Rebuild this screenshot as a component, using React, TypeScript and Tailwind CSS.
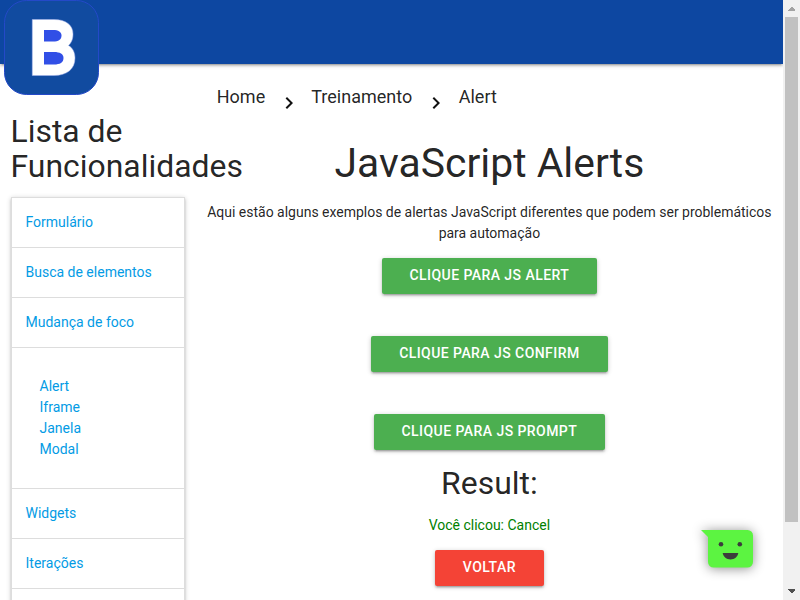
import React from "react";

const shadow =
  "shadow-[0_2px_2px_0_rgba(0,0,0,0.14),0_3px_1px_-2px_rgba(0,0,0,0.12),0_1px_5px_0_rgba(0,0,0,0.2)]";

function Logo() {
  return (
    <svg className="absolute left-1 top-0 h-[95px] w-[95px]" viewBox="0 0 95 95">
      <rect x="0.5" y="0.5" width="94" height="94" rx="22" fill="#114ba0" stroke="#2449c8" />
      <path
        fillRule="evenodd"
        fill="#fff"
        stroke="#a9b5ee"
        strokeWidth="0.5"
        d="M28.300 19.500H50C62 19.500 69 25 69 34C69 40 67 43 64.500 45.500C69 48 71 53 71 58C71 69 63 75.500 50 75.500H28.300Z"
      />
      <path fill="#314fe6" d="M40 30H49C54.500 30 57.500 32 57.500 35.500C57.500 39.500 54.500 41.500 49 41.500H40Z" />
      <path fill="#314fe6" d="M40 52H50C56 52 59.500 54 59.500 58C59.500 62.500 56 64.500 50 64.500H40Z" />
    </svg>
  );
}

function Chevron() {
  return (
    <svg className="mt-[14.500px] h-6 w-6" viewBox="0 0 24 24" fill="#111">
      <path d="M10 6L8.590 7.410 13.170 12l-4.580 4.590L10 18l6-6z" />
    </svg>
  );
}

function Item({ label }: { label: string }) {
  return <li className="h-[50px] shrink-0 border-b border-[#ddd] px-[14px] leading-[49px]">{label}</li>;
}

function Button({ label, className }: { label: string; className: string }) {
  return (
    <button
      className={`h-9 shrink-0 rounded-[2px] pb-[1.500px] text-center text-[14px] font-medium leading-[34px] tracking-[0.44px] text-white ${shadow} ${className}`}
    >
      {label}
    </button>
  );
}

function ChatBubble() {
  return (
    <svg
      className="absolute left-[700px] top-[528px] h-10 w-[54px] drop-shadow-[0_1px_6px_rgba(0,0,0,0.45)]"
      viewBox="0 0 54 40"
    >
      <path fill="#5cf441" d="M1 2H47.500A5.500 5.500 0 0 1 53 7.500V34A5.500 5.500 0 0 1 47.500 39.500H13.500A5.500 5.500 0 0 1 8 34V9Z" />
      <circle cx="21" cy="16.300" r="2.300" fill="#3c3c3c" />
      <circle cx="39.800" cy="16.300" r="2.300" fill="#3c3c3c" />
      <path fill="#3c3c3c" d="M22.700 25H38.300C37.500 29 34.500 31.400 30.500 31.400S23.500 29 22.700 25Z" />
    </svg>
  );
}

export default function App() {
  return (
    <div className="relative flex h-[600px] w-[800px] overflow-hidden bg-white font-[Roboto,sans-serif] text-[14px] leading-[21px] text-[rgba(0,0,0,0.87)]">
      <div className="flex h-[600px] w-[783px] flex-col overflow-hidden">
        <nav className={`h-16 shrink-0 bg-[#0d47a1] ${shadow}`} />
        <div className="flex">
          <aside className="w-[195.750px] shrink-0 px-[10.500px] pt-[49.500px]">
            <h4 className="text-[31.920px] leading-[35.110px]">
              Lista de
              <br />
              Funcionalidades
            </h4>
            <ul className={`mt-[13px] flex flex-col border border-b-0 border-[#ddd] text-[#039be5] ${shadow}`}>
              <Item label="Formulário" />
              <Item label="Busca de elementos" />
              <Item label="Mudança de foco" />
              <li className="h-[141px] shrink-0 border-b border-[#ddd] px-7 pt-7">
                <div>Alert</div>
                <div>Iframe</div>
                <div>Janela</div>
                <div>Modal</div>
              </li>
              <Item label="Widgets" />
              <Item label="Iterações" />
              <Item label="" />
            </ul>
          </aside>
          <main className="flex w-[587.250px] flex-col items-center px-[10.500px] pt-3">
            <div className="flex h-14 w-full shrink-0 pl-[10.500px] text-[18px] leading-[42px]">
              <span className="w-[60px]">Home</span>
              <Chevron />
              <span className="ml-[10.500px] w-[113px]">Treinamento</span>
              <Chevron />
              <span className="ml-[10.500px]">Alert</span>
            </div>
            <h3 className="mt-[9px] text-[40.880px] leading-[45px]">JavaScript Alerts</h3>
            <p className="mt-4 text-center tracking-[-0.010px]">
              Aqui estão alguns exemplos de alertas JavaScript diferentes que podem ser problemáticos para automação
            </p>
            <Button label="CLIQUE PARA JS ALERT" className="mt-[14px] w-[215px] bg-[#4caf50]" />
            <Button label="CLIQUE PARA JS CONFIRM" className="mt-[42px] w-[237px] bg-[#4caf50]" />
            <Button label="CLIQUE PARA JS PROMPT" className="mt-[42px] w-[231px] bg-[#4caf50]" />
            <h4 className="mt-4 text-[31.920px] leading-[35.110px]">Result:</h4>
            <p className="mt-[14px] text-[green]">Você clicou: Cancel</p>
            <Button label="VOLTAR" className="mt-[14px] w-[109px] bg-[#f44336]" />
          </main>
        </div>
      </div>
      <div className="flex h-[600px] w-[17px] flex-col items-center bg-[#f1f1f1]">
        <svg className="h-[17px] w-[17px]" viewBox="0 0 17 17" fill="#a3a3a3" shapeRendering="crispEdges">
          <path d="M5 11V10L8 7H9L12 10V11Z" />
        </svg>
        <div className="h-[505px] w-[13px] bg-[#c1c1c1]" />
        <svg className="mt-auto h-[17px] w-[17px]" viewBox="0 0 17 17" fill="#505050" shapeRendering="crispEdges">
          <path d="M5 6V7L8 10H9L12 7V6Z" />
        </svg>
      </div>
      <Logo />
      <ChatBubble />
    </div>
  );
}
